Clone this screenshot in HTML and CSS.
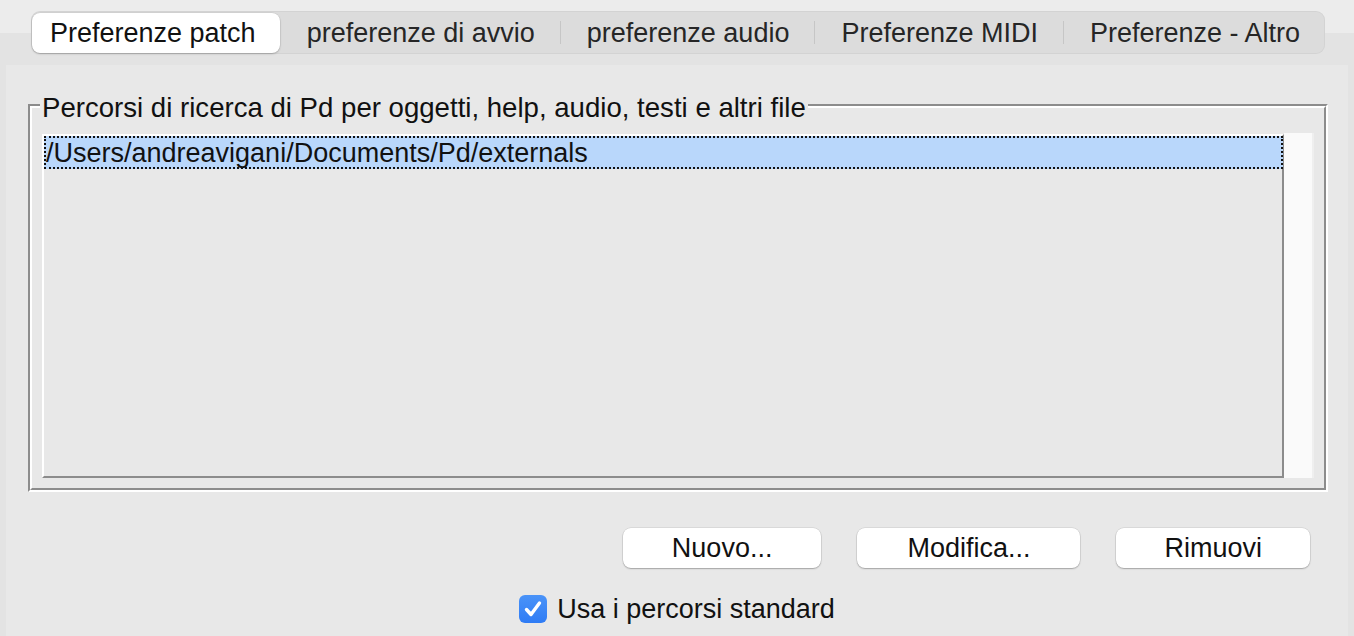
FILE: index.html
```html
<!DOCTYPE html>
<html lang="it">
<head>
<meta charset="utf-8">
<title>Preferenze</title>
<link rel="stylesheet" href="styles.css">
</head>
<body>
<div class="window">
  <div class="header">
    <div class="tabbar">
      <div class="tab active">Preferenze patch</div>
      <div class="tab">preferenze di avvio</div>
      <div class="tab sep">preferenze audio</div>
      <div class="tab sep">Preferenze MIDI</div>
      <div class="tab sep">Preferenze - Altro</div>
    </div>
  </div>
  <div class="pane">
    <div class="group">
      <div class="group-inner">
        <span class="legend">Percorsi di ricerca di Pd per oggetti, help, audio, testi e altri file</span>
        <div class="list-wrap">
          <div class="listbox">
            <div class="row selected">/Users/andreavigani/Documents/Pd/externals</div>
          </div>
          <div class="scroll"></div>
        </div>
      </div>
    </div>
    <div class="buttons">
      <button class="btn">Nuovo...</button>
      <button class="btn btn-wide">Modifica...</button>
      <button class="btn btn-narrow">Rimuovi</button>
    </div>
    <label class="check-row">
      <span class="checkbox">
        <svg viewBox="0 0 28 28" width="28" height="28"><path d="M7.5 14.5 L12 19.5 L20.5 8" fill="none" stroke="#fff" stroke-width="3.4" stroke-linecap="round" stroke-linejoin="round"/></svg>
      </span>
      <span class="check-label">Usa i percorsi standard</span>
    </label>
  </div>
</div>
</body>
</html>
```
FILE: styles.css
```css
html, body {
  margin: 0;
  padding: 0;
}
body {
  width: 1354px;
  height: 636px;
  overflow: hidden;
  background: #e3e3e3;
  font-family: "Liberation Sans", Arial, sans-serif;
  font-size: 27px;
  color: #1c1c1c;
}
.window {
  display: flex;
  flex-direction: column;
  height: 636px;
}
.header {
  height: 65px;
  box-sizing: border-box;
  padding: 11px 0 0 31px;
  background: linear-gradient(#ececec 0, #ececec 33px, #e3e3e3 33px);
  display: flex;
  align-items: flex-start;
}
.tabbar {
  display: flex;
  height: 43px;
  background: #dcdcdc;
  border-radius: 9px;
  box-shadow: inset 0 0 0 1px rgba(0,0,0,0.04);
}
.tab {
  position: relative;
  padding: 0 25px 0 27px;
  line-height: 44px;
  color: #262626;
  white-space: nowrap;
}
.tab.active {
  background: #fff;
  border-radius: 8px;
  margin: 2px 0 1px 1px;
  line-height: 41px;
  height: 40px;
  padding: 0 24px 0 18px;
  color: #111;
  box-shadow: 0 1px 2px rgba(0,0,0,0.22), 0 0 0 0.5px rgba(0,0,0,0.08);
}
.tab.sep::before {
  content: "";
  position: absolute;
  left: 0;
  top: 10px;
  height: 23px;
  width: 1px;
  background: #c6c6c6;
}
.pane {
  flex: 1;
  margin: 0 6px;
  background: #e8e8e8;
  padding: 39px 20px 0 22px;
  display: flex;
  flex-direction: column;
}
.group {
  height: 388px;
  box-sizing: border-box;
  border: 2px solid;
  border-color: #8c8c8c #fff #fff #8c8c8c;
}
.group-inner {
  position: relative;
  height: 100%;
  box-sizing: border-box;
  border: 2px solid;
  border-color: #fff #8c8c8c #8c8c8c #fff;
  padding: 26px 10px 10px 10px;
}
.legend {
  position: absolute;
  left: 8px;
  top: -15px;
  line-height: 30px;
  padding: 0 2px;
  font-size: 27.6px;
  background: #e8e8e8;
  color: #111;
  white-space: nowrap;
}
.list-wrap {
  display: flex;
  height: 100%;
}
.listbox {
  flex: 1;
  border: 2px solid;
  border-color: #fff #8c8c8c #8c8c8c #fff;
  background: #e8e8e8;
}
.scroll {
  width: 28px;
  background: #fafafa;
  border-right: 2px solid #efefef;
  margin-top: -1px;
}
.row {
  height: 33px;
  line-height: 31px;
  box-sizing: border-box;
  color: #111;
  white-space: nowrap;
}
.row.selected {
  background: #b9d7fb;
  border: 2px dotted #111;
  margin-right: -1px;
}
.buttons {
  display: flex;
  justify-content: flex-end;
  gap: 36px;
  margin-top: 36px;
  padding-right: 18px;
}
.btn {
  font-family: "Liberation Sans", Arial, sans-serif;
  font-size: 27px;
  color: #111;
  height: 40px;
  padding: 0 49px;
  background: #fff;
  border: none;
  border-radius: 8px;
  box-shadow: 0 1px 1.5px rgba(0,0,0,0.25), 0 0 0 0.5px rgba(0,0,0,0.12);
}
.btn-wide {
  padding: 0 50px;
}
.btn-narrow {
  padding: 0 48px;
}
.check-row {
  display: flex;
  align-items: center;
  justify-content: center;
  gap: 10px;
  margin-top: 26px;
  margin-right: 2px;
}
.checkbox {
  width: 28px;
  height: 28px;
  border-radius: 6px;
  background: linear-gradient(#4a93f8, #2f7cf5);
  display: flex;
}
.check-label {
  color: #111;
  line-height: 30px;
}
```
